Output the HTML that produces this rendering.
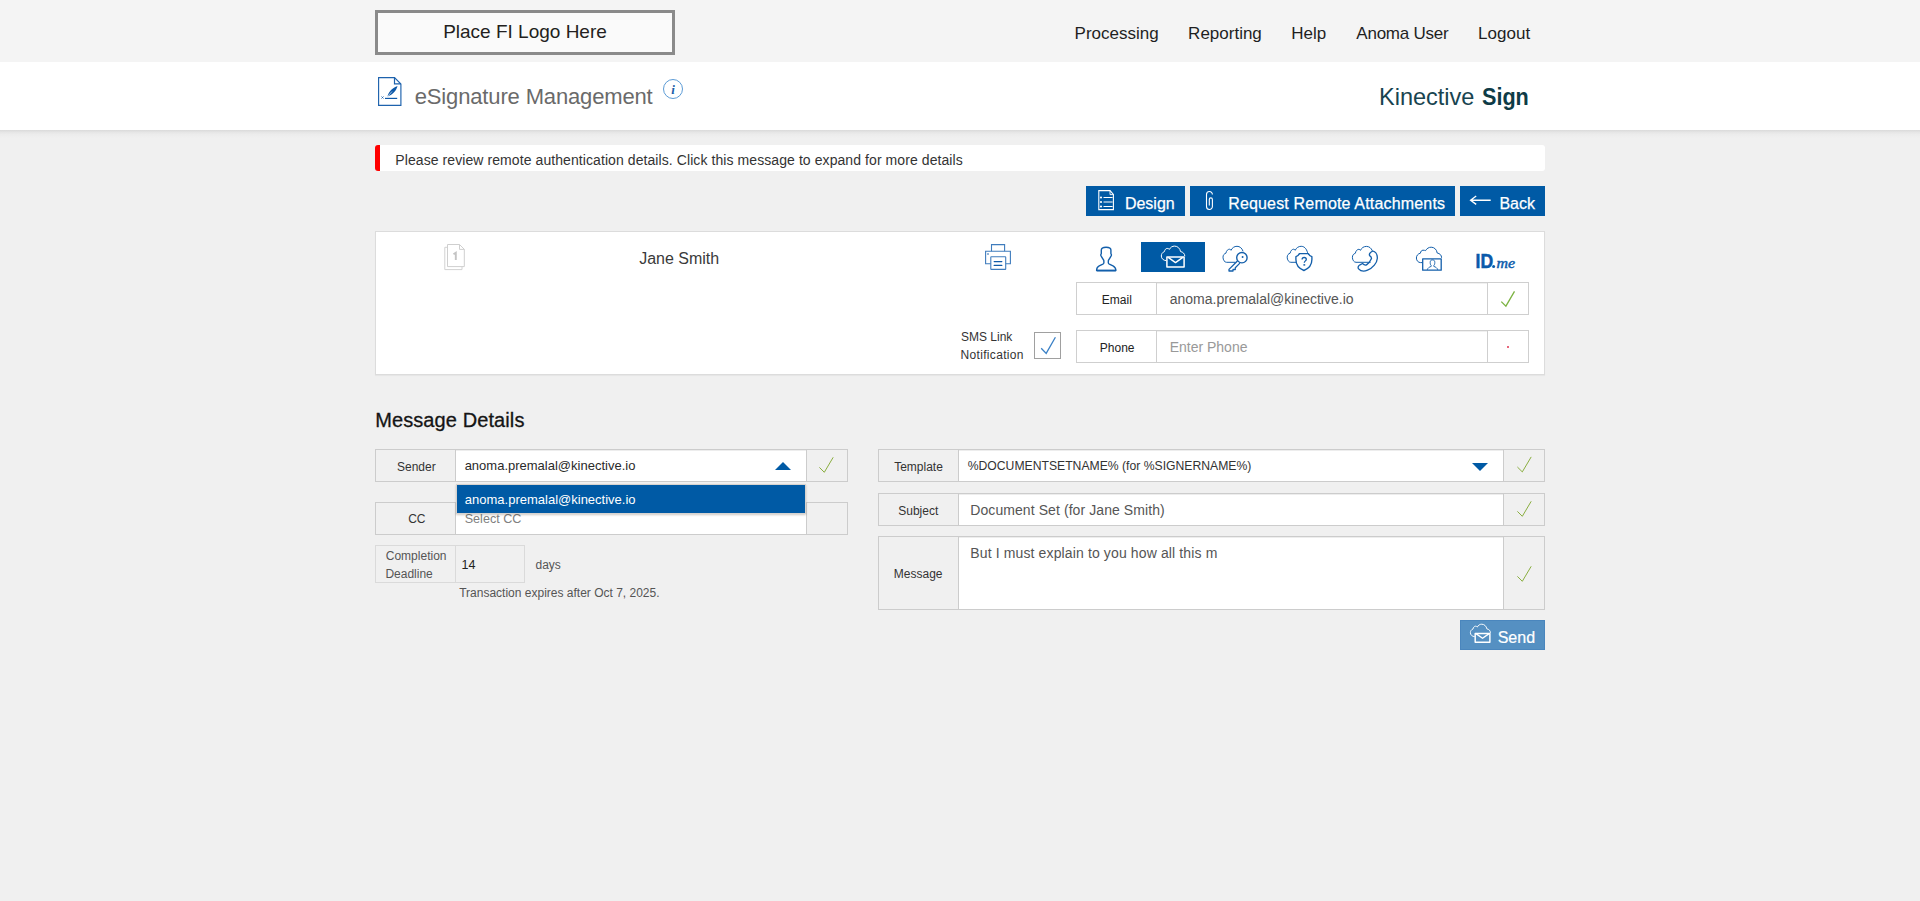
<!DOCTYPE html>
<html><head><meta charset="utf-8"><title>eSignature Management</title>
<style>
html,body{margin:0;padding:0;}
body{width:1920px;height:901px;overflow:hidden;position:relative;background:#f0f0f0;font-family:"Liberation Sans",sans-serif;}
body>div,body>svg{position:absolute;}
.t{white-space:nowrap;}
svg{overflow:visible;}
</style></head><body>
<div style="left:0px;top:0px;width:1920px;height:62px;background:#f4f4f4"></div>
<div style="left:0px;top:62px;width:1920px;height:68px;background:#fff"></div>
<div style="left:0px;top:130px;width:1920px;height:8px;background:linear-gradient(#dadada,#e6e6e6 30%,#ececec 55%,#f0f0f0)"></div>
<div style="left:375px;top:10px;width:300px;height:45px;background:#fafafa;border:3px solid #8a8a8a;box-sizing:border-box"></div>
<div class="t" style="left:443.14px;top:22.00px;font-size:19px;line-height:19px;color:#231f20;">Place FI Logo Here</div>
<div class="t" style="left:1074.61px;top:25.00px;font-size:17px;line-height:17px;color:#1f1f1f;">Processing</div>
<div class="t" style="left:1188.11px;top:25.00px;font-size:17px;line-height:17px;color:#1f1f1f;">Reporting</div>
<div class="t" style="left:1291.21px;top:25.00px;font-size:17px;line-height:17px;color:#1f1f1f;">Help</div>
<div class="t" style="left:1356.37px;top:25.00px;font-size:17px;line-height:17px;color:#1f1f1f;letter-spacing:-0.25px;">Anoma User</div>
<div class="t" style="left:1478.11px;top:25.00px;font-size:17px;line-height:17px;color:#1f1f1f;">Logout</div>
<svg style="left:376px;top:75px" width="28" height="33" viewBox="376 75 28 33">
<path d="M378.6,77.6 H394.5 L400.9,84 V105.4 H378.6 Z" fill="none" stroke="#1d62ad" stroke-width="1.15"/>
<path d="M394.5,77.5 V83.8 H401" fill="none" stroke="#1d62ad" stroke-width="1.2"/>
<path d="M381.5,96.5 l2,2 M383.5,96.5 l-2,2" stroke="#1d62ad" stroke-width="0.9"/>
<path d="M385,98.4 H397.2" stroke="#0d58a8" stroke-width="1.2"/>
<path d="M387.5,97 C388,93 391,88.5 397.5,86 C396.5,90 393.5,94 388.5,96 Z" fill="#0d58a8"/>
<path d="M387,97.2 L392,91.5" stroke="#fff" stroke-width="0.6"/>
</svg>
<div class="t" style="left:414.77px;top:86.00px;font-size:22px;line-height:22px;color:#6a6a6a;letter-spacing:-0.15px;">eSignature Management</div>
<svg style="left:662px;top:78px" width="22" height="22" viewBox="662 78 22 22">
<circle cx="673" cy="89" r="9.5" fill="none" stroke="#4a90d0" stroke-width="0.9"/>
<text x="673" y="94" text-anchor="middle" font-family="Liberation Serif" font-style="italic" font-weight="bold" font-size="13" fill="#1c5fa9">i</text>
</svg>
<div class="t" style="left:1378.73px;top:85.00px;font-size:24px;line-height:24px;color:#184450;transform:scaleX(0.98);transform-origin:0 0;">Kinective</div>
<div class="t" style="left:1481.91px;top:85.00px;font-size:24px;line-height:24px;color:#0e3b46;font-weight:bold;transform:scaleX(0.9);transform-origin:0 0;">Sign</div>
<div style="left:375px;top:145px;width:1170px;height:26px;background:#fff;border-left:5px solid #ff0000;border-radius:3px;box-sizing:border-box"></div>
<div class="t" style="left:395.35px;top:153.00px;font-size:14px;line-height:14px;color:#333;letter-spacing:0.08px;">Please review remote authentication details. Click this message to expand for more details</div>
<div style="left:1086px;top:186px;width:99px;height:30px;background:#005aa5"></div>
<div style="left:1190px;top:186px;width:265px;height:30px;background:#005aa5"></div>
<div style="left:1460px;top:186px;width:85px;height:30px;background:#005aa5"></div>
<svg style="left:1094px;top:186px" width="26" height="30" viewBox="1094 186 26 30">
<path d="M1098.8,190.6 H1110 L1113.4,194.4 V209.6 H1098.8 Z" fill="none" stroke="#fff" stroke-width="1.1"/>
<path d="M1110,190.6 V194.6 H1113.4" fill="none" stroke="#fff" stroke-width="0.9"/>
<circle cx="1101" cy="197.5" r="1.1" fill="#fff"/><circle cx="1101" cy="202" r="1.1" fill="#fff"/><circle cx="1101" cy="206.5" r="1.1" fill="#fff"/>
<path d="M1103.5,197.5 H1112.6 M1103.5,202 H1112.6 M1103.5,206.5 H1112.6" stroke="#fff" stroke-width="1"/>
</svg>
<svg style="left:1198px;top:186px" width="24" height="30" viewBox="1198 186 24 30">
<path d="M1212.4,194.5 A2.95,2.95 0 0 0 1206.5,194.5 V206.5 A2.95,2.95 0 0 0 1212.4,206.5 V199.4 A1.55,1.55 0 0 0 1209.3,199.4 V205.6" fill="none" stroke="#fff" stroke-width="1.1"/>
</svg>
<svg style="left:1460px;top:186px" width="40" height="30" viewBox="1460 186 40 30">
<path d="M1476.2,196 L1470.6,200.2 L1476.2,204.4 M1470.8,200.2 H1490.7" fill="none" stroke="#fff" stroke-width="1.35"/>
</svg>
<div class="t" style="left:1124.89px;top:196.00px;font-size:16px;line-height:16px;color:#fff;-webkit-text-stroke:0.25px #fff;">Design</div>
<div class="t" style="left:1228.19px;top:196.00px;font-size:16px;line-height:16px;color:#fff;letter-spacing:0.17px;-webkit-text-stroke:0.25px #fff;">Request Remote Attachments</div>
<div class="t" style="left:1499.39px;top:196.00px;font-size:16px;line-height:16px;color:#fff;-webkit-text-stroke:0.25px #fff;">Back</div>
<div style="left:375px;top:231px;width:1170px;height:144px;background:#fff;border:1px solid #dcdcdc;box-sizing:border-box;box-shadow:0 1px 1px rgba(0,0,0,.04)"></div>
<svg style="left:440px;top:240px" width="30" height="34" viewBox="440 240 30 34">
<path d="M447.3,247.3 H444.8 V269.6 H462 V267" fill="none" stroke="#d2d2d2" stroke-width="1"/>
<path d="M447.5,244.5 H459.5 L464.3,249.3 V266.6 H447.5 Z" fill="#fff" stroke="#cfcfcf" stroke-width="1"/>
<path d="M459.5,244.5 V249.4 H464.3" fill="none" stroke="#cfcfcf" stroke-width="1"/>
<path d="M453.5,254.3 L455.8,252.7 V260" fill="none" stroke="#c4c4c4" stroke-width="1.9"/>
</svg>
<div class="t" style="left:639.15px;top:251.00px;font-size:16px;line-height:16px;color:#3a3a3a;">Jane Smith</div>
<svg style="left:980px;top:240px" width="36" height="34" viewBox="980 240 36 34">
<g fill="none" stroke="#3f7cbd" stroke-width="1.1">
<path d="M991.5,251.3 V244.6 H1004.6 V251.3"/>
<path d="M990.8,263.7 H985.6 V251.3 H1010.4 V263.7 H1005.7"/>
<rect x="990.8" y="256.7" width="14.9" height="12.7" rx="0.5"/>
</g>
<path d="M994.2,261.6 H1001.8 M994.2,265.4 H1001.8" stroke="#0f5aa8" stroke-width="1.3" stroke-linecap="round"/>
<circle cx="988" cy="254" r="0.8" fill="#0f5aa8"/>
</svg>
<div style="left:1141px;top:242px;width:64px;height:30px;background:#005aa5"></div>
<svg style="left:1090px;top:240px" width="440" height="36" viewBox="1090 240 440 36">
<g fill="none" stroke="#135fab" stroke-width="1.4" stroke-linejoin="round">
<path d="M1096.6,270.6 H1115.9 C1115.9,268 1115,266.8 1113,265.8 L1109.3,264.2 C1108.5,263.8 1108.2,263.2 1108.3,262.2 L1108.4,260.4 L1110.6,256.8 C1111.4,256 1111.6,254.6 1110.9,253.6 V250 C1110.9,248.3 1109.4,247.2 1106.1,247.2 C1102.8,247.2 1101.3,248.3 1101.3,250 V253.6 C1100.6,254.6 1100.8,256 1101.6,256.8 L1103.8,260.4 L1103.9,262.2 C1104,263.2 1103.7,263.8 1102.9,264.2 L1099.2,265.8 C1097.2,266.8 1096.6,268 1096.6,270.6 Z"/>
<path stroke-width="1.8" d="M1096.8,270.5 H1115.8"/>
</g>
<g fill="none" stroke="#fff" stroke-linejoin="round">
<path stroke-width="1" d="M1166.3,260.6 C1163.5,260.6 1161.3,258.6 1161.3,256 C1161.3,253.9 1162.6,252.2 1164.4,251.6 C1164.8,249.7 1165.8,248.4 1167.2,248.4 C1168.1,248.4 1168.9,248.8 1169.4,249.4 C1170.4,247.3 1172.3,246.1 1174.6,246.1 C1177.6,246.1 1180,248.4 1180.6,251.6 C1182.9,251.9 1184.7,253.6 1184.8,256.2"/>
<rect stroke-width="1.5" x="1166.9" y="256.9" width="17.2" height="10.2"/>
<path stroke-width="1.4" d="M1168.2,257.4 L1175.5,262.6 L1182.8,257.4"/>
</g>
<g fill="none" stroke="#135fab" stroke-linejoin="round">
<path stroke-width="1" d="M1235.4,262.3 H1226.6 C1224.5,262.3 1223,259.9 1223,257.2 C1223,255.1 1224.2,253.7 1225.9,253.2 C1226.4,250.6 1228,249.2 1229.5,249.2 C1230.2,249.2 1230.7,249.6 1231,250.3 C1232.2,247.8 1234.3,246.3 1237,246.3 C1239.8,246.3 1242,248.1 1243.1,251.4"/>
<circle stroke-width="1.4" cx="1241.9" cy="257.7" r="5.2"/>
<path stroke-width="1.3" d="M1237.4,261 L1229,269.4 V271 H1233 V269.5 H1235.3 V267.7 L1239.9,263.1"/>
</g>
<circle cx="1242.6" cy="257" r="0.95" fill="#135fab"/>
<g fill="none" stroke="#135fab" stroke-linejoin="round">
<path stroke-width="1" d="M1296.2,262.3 H1290.8 C1288.7,262.3 1287.2,259.9 1287.2,257.2 C1287.2,255.1 1288.4,253.7 1290.1,253.2 C1290.6,250.6 1292.2,249.2 1293.7,249.2 C1294.4,249.2 1294.9,249.6 1295.2,250.3 C1296.4,247.8 1298.5,246.3 1301.2,246.3 C1304,246.3 1306.4,248.3 1307.6,252.8"/>
<path stroke-width="1.35" d="M1299.4,253.6 H1308.3 C1309,255.1 1310.3,256.3 1311.9,256.7 V259.6 C1311.9,264.6 1308.8,268.6 1303.9,270.5 C1299,268.6 1295.9,264.6 1295.9,259.6 V256.7 C1297.5,256.3 1298.7,255.1 1299.4,253.6 Z"/>
<path stroke-width="1.3" d="M1302.1,259.6 C1302.1,258.1 1302.9,257.5 1304.2,257.5 C1305.5,257.5 1306.3,258.3 1306.3,259.4 C1306.3,260.8 1304.3,261 1304.3,262.7"/>
<path stroke-width="1.5" d="M1303.4,264.9 H1305.2"/>
</g>
<g fill="none" stroke="#135fab" stroke-linejoin="round">
<path stroke-width="1" d="M1370.6,262.3 H1356 C1353.9,262.3 1352.4,259.9 1352.4,257.3 C1352.4,255.2 1353.6,253.8 1355.3,253.3 C1355.8,250.7 1357.4,249.3 1358.9,249.3 C1359.6,249.3 1360.1,249.7 1360.4,250.4 C1361.6,247.9 1363.7,246.4 1366.4,246.4 C1369.2,246.4 1371.3,248.1 1372.3,250.8"/>
<path stroke-width="1.3" d="M1372.8,251 C1376,252 1377.5,255 1377.3,258.5 C1377,263 1373,267.8 1367.5,270.2 C1364.2,271.6 1360.5,271 1358.6,268.8 C1357.6,267.6 1358.2,265.8 1360,264.8 L1362.5,263.5 C1363.8,264.8 1365.5,265.5 1366.8,264.6 C1368.6,263.4 1370.4,261 1371.4,258.8 C1371.8,257.2 1370.8,256.3 1369.6,255.6 C1369,254.3 1369.6,252.6 1372.8,251 Z"/>
</g>
<g fill="none" stroke="#135fab" stroke-linejoin="round">
<path stroke-width="1" d="M1422.4,262.6 H1420.6 C1418.2,262.6 1416.4,260.6 1416.4,258 C1416.4,255.6 1418.1,253.6 1420.4,253.2 C1420.6,251.5 1421.6,250.2 1423,250.2 C1424,250.2 1425,250.4 1425.6,250.6 C1426.8,248.5 1428.8,247.2 1431.2,247.2 C1434.4,247.2 1436.8,249.7 1437.2,253 C1439.8,253.5 1441.6,255.1 1441.6,257.8"/>
<rect stroke-width="1.3" x="1422.7" y="258.8" width="18.5" height="11.4"/>
<path stroke-width="0.9" d="M1427.2,269.9 C1427.8,267.8 1429.4,267 1431.2,266.4 V265.5 C1430.3,264.8 1430.2,263.5 1430.2,262.3 C1430.2,260.6 1431.1,259.9 1432.5,259.9 C1433.9,259.9 1434.8,260.6 1434.8,262.3 C1434.8,263.5 1434.7,264.8 1433.8,265.5 V266.4 C1435.6,267 1437.2,267.8 1437.8,269.9"/>
</g>
<text x="1475.6" y="268" font-family="Liberation Sans" font-weight="bold" font-size="19.5" fill="#0a5aaa" stroke="#0a5aaa" stroke-width="0.5" textLength="17.6" lengthAdjust="spacingAndGlyphs">ID</text>
<circle cx="1493.6" cy="266.6" r="1.5" fill="#0a5aaa"/>
<text x="1496.4" y="268" font-family="Liberation Serif" font-style="italic" font-size="14.5" fill="#0a5aaa" stroke="#0a5aaa" stroke-width="0.45" textLength="18.6" lengthAdjust="spacingAndGlyphs">me</text>
</svg>
<div style="left:1076px;top:282px;width:453px;height:33px;background:#fff;border:1px solid #cfcfcf;box-sizing:border-box"></div>
<div style="left:1156px;top:282px;width:1px;height:33px;background:#cfcfcf"></div>
<div style="left:1487px;top:282px;width:1px;height:33px;background:#cfcfcf"></div>
<div style="left:1157px;top:283px;width:330px;height:1px;background:rgba(0,0,0,.06)"></div>
<div style="left:1076px;top:330px;width:453px;height:33px;background:#fff;border:1px solid #cfcfcf;box-sizing:border-box"></div>
<div style="left:1156px;top:330px;width:1px;height:33px;background:#cfcfcf"></div>
<div style="left:1487px;top:330px;width:1px;height:33px;background:#cfcfcf"></div>
<div style="left:1157px;top:331px;width:330px;height:1px;background:rgba(0,0,0,.06)"></div>
<div class="t" style="left:1101.82px;top:294.00px;font-size:12px;line-height:12px;color:#222;">Email</div>
<div class="t" style="left:1169.71px;top:292.00px;font-size:14px;line-height:14px;color:#555;">anoma.premalal@kinective.io</div>
<div class="t" style="left:1099.82px;top:342.00px;font-size:12px;line-height:12px;color:#222;">Phone</div>
<div class="t" style="left:1169.65px;top:340.00px;font-size:14px;line-height:14px;color:#999;">Enter Phone</div>
<svg style="left:1495px;top:286px" width="26" height="26" viewBox="1495 286 26 26">
<path d="M1501.3,301.6 L1505.9,306.1 L1514.5,291.4" fill="none" stroke="#7cb342" stroke-width="1.3"/>
</svg>
<div style="left:1507px;top:346px;width:2px;height:2px;background:#e03450;border-radius:1px"></div>
<div class="t" style="left:960.96px;top:331.00px;font-size:12px;line-height:12px;color:#333;">SMS Link</div>
<div class="t" style="left:960.52px;top:349.00px;font-size:12px;line-height:12px;color:#333;letter-spacing:0.33px;">Notification</div>
<div style="left:1034px;top:332px;width:27px;height:27px;background:#fff;border:1.5px solid #a0a0a0;box-sizing:border-box"></div>
<svg style="left:1034px;top:332px" width="27" height="27" viewBox="1034 332 27 27">
<path d="M1041.2,348.2 L1046.2,353.4 L1055.4,337.2" fill="none" stroke="#3a80c6" stroke-width="1.3"/>
</svg>
<div class="t" style="left:375.16px;top:410.00px;font-size:20px;line-height:20px;color:#151515;letter-spacing:0.1px;-webkit-text-stroke:0.3px #151515;">Message Details</div>
<div style="left:375px;top:449px;width:473px;height:33px;background:#fff;border:1px solid #cccccc;box-sizing:border-box"></div>
<div style="left:376px;top:450px;width:79px;height:31px;background:#f0f0f0"></div>
<div style="left:455px;top:449px;width:1px;height:33px;background:#cccccc"></div>
<div style="left:807px;top:450px;width:40px;height:31px;background:#f0f0f0"></div>
<div style="left:806px;top:449px;width:1px;height:33px;background:#cccccc"></div>
<div style="left:456px;top:450px;width:350px;height:1px;background:rgba(0,0,0,.07)"></div>
<div class="t" style="left:396.96px;top:461.00px;font-size:12px;line-height:12px;color:#333;">Sender</div>
<div class="t" style="left:464.65px;top:459.00px;font-size:13px;line-height:13px;color:#2a2a2a;">anoma.premalal@kinective.io</div>
<svg style="left:770px;top:458px" width="26" height="16" viewBox="770 458 26 16"><path d="M775,470 L783,462 L791,470 Z" fill="#005aa5"/></svg>
<div style="left:375px;top:502px;width:473px;height:33px;background:#fff;border:1px solid #cccccc;box-sizing:border-box"></div>
<div style="left:376px;top:503px;width:79px;height:31px;background:#f0f0f0"></div>
<div style="left:455px;top:502px;width:1px;height:33px;background:#cccccc"></div>
<div style="left:807px;top:503px;width:40px;height:31px;background:#f0f0f0"></div>
<div style="left:806px;top:502px;width:1px;height:33px;background:#cccccc"></div>
<div style="left:456px;top:503px;width:350px;height:1px;background:rgba(0,0,0,.07)"></div>
<div class="t" style="left:408.19px;top:513.00px;font-size:12px;line-height:12px;color:#333;">CC</div>
<div class="t" style="left:464.73px;top:513.00px;font-size:12.6px;line-height:12.6px;color:#808080;">Select CC</div>
<div style="left:456px;top:484px;width:350px;height:30px;background:#d6d3d0;box-shadow:0 1px 2px rgba(60,40,20,.25)"></div>
<div style="left:457px;top:485px;width:348px;height:28px;background:#005aa5"></div>
<div class="t" style="left:464.85px;top:493.00px;font-size:13px;line-height:13px;color:#fff;">anoma.premalal@kinective.io</div>
<div style="left:375px;top:545px;width:150px;height:38px;background:#f0f0f0;border:1px solid #dadada;box-sizing:border-box"></div>
<div style="left:455px;top:545px;width:1px;height:38px;background:#dadada"></div>
<div class="t" style="left:385.79px;top:550.00px;font-size:12px;line-height:12px;color:#555;">Completion</div>
<div class="t" style="left:385.42px;top:568.00px;font-size:12px;line-height:12px;color:#555;">Deadline</div>
<div class="t" style="left:461.45px;top:559.00px;font-size:12.5px;line-height:12.5px;color:#222;">14</div>
<div class="t" style="left:535.50px;top:559.00px;font-size:12px;line-height:12px;color:#555;">days</div>
<div class="t" style="left:459.23px;top:587.00px;font-size:12px;line-height:12px;color:#555;">Transaction expires after Oct 7, 2025.</div>
<div style="left:878px;top:449px;width:667px;height:33px;background:#fff;border:1px solid #cccccc;box-sizing:border-box"></div>
<div style="left:879px;top:450px;width:79px;height:31px;background:#f0f0f0"></div>
<div style="left:958px;top:449px;width:1px;height:33px;background:#cccccc"></div>
<div style="left:1504px;top:450px;width:40px;height:31px;background:#f0f0f0"></div>
<div style="left:1503px;top:449px;width:1px;height:33px;background:#cccccc"></div>
<div style="left:959px;top:450px;width:544px;height:1px;background:rgba(0,0,0,.07)"></div>
<div class="t" style="left:894.13px;top:461.00px;font-size:12px;line-height:12px;color:#333;">Template</div>
<div class="t" style="left:967.67px;top:460.00px;font-size:12.2px;line-height:12.2px;color:#333;">%DOCUMENTSETNAME% (for %SIGNERNAME%)</div>
<svg style="left:1468px;top:458px" width="26" height="16" viewBox="1468 458 26 16"><path d="M1472,463 L1488,463 L1480,471 Z" fill="#005aa5"/></svg>
<div style="left:878px;top:493px;width:667px;height:33px;background:#fff;border:1px solid #cccccc;box-sizing:border-box"></div>
<div style="left:879px;top:494px;width:79px;height:31px;background:#f0f0f0"></div>
<div style="left:958px;top:493px;width:1px;height:33px;background:#cccccc"></div>
<div style="left:1504px;top:494px;width:40px;height:31px;background:#f0f0f0"></div>
<div style="left:1503px;top:493px;width:1px;height:33px;background:#cccccc"></div>
<div style="left:959px;top:494px;width:544px;height:1px;background:rgba(0,0,0,.07)"></div>
<div class="t" style="left:898.26px;top:505.00px;font-size:12px;line-height:12px;color:#333;">Subject</div>
<div class="t" style="left:970.25px;top:503.00px;font-size:14px;line-height:14px;color:#555;letter-spacing:0.08px;">Document Set (for Jane Smith)</div>
<div style="left:878px;top:536px;width:667px;height:74px;background:#fff;border:1px solid #cccccc;box-sizing:border-box"></div>
<div style="left:879px;top:537px;width:79px;height:72px;background:#f0f0f0"></div>
<div style="left:958px;top:536px;width:1px;height:74px;background:#cccccc"></div>
<div style="left:1504px;top:537px;width:40px;height:72px;background:#f0f0f0"></div>
<div style="left:1503px;top:536px;width:1px;height:74px;background:#cccccc"></div>
<div style="left:959px;top:537px;width:544px;height:1px;background:rgba(0,0,0,.07)"></div>
<div class="t" style="left:893.82px;top:568.00px;font-size:12px;line-height:12px;color:#333;">Message</div>
<div class="t" style="left:970.25px;top:546.00px;font-size:14px;line-height:14px;color:#555;letter-spacing:0.13px;">But I must explain to you how all this m</div>
<svg style="left:816px;top:454px" width="22" height="22" viewBox="816 454 22 22"><path d="M819.4,467.4 L824.3,472.3 L833.2,457.3" fill="none" stroke="#8aae40" stroke-width="1"/></svg>
<svg style="left:1514px;top:453px" width="22" height="22" viewBox="1514 453 22 22"><path d="M1517.4,467.0 L1522.3,471.90000000000003 L1531.2,456.90000000000003" fill="none" stroke="#8aae40" stroke-width="1"/></svg>
<svg style="left:1514px;top:498px" width="22" height="22" viewBox="1514 498 22 22"><path d="M1517.4,511.4 L1522.3,516.3 L1531.2,501.3" fill="none" stroke="#8aae40" stroke-width="1"/></svg>
<svg style="left:1514px;top:563px" width="22" height="22" viewBox="1514 563 22 22"><path d="M1517.4,576.4 L1522.3,581.3 L1531.2,566.3" fill="none" stroke="#8aae40" stroke-width="1"/></svg>
<div style="left:1460px;top:620px;width:85px;height:30px;background:#5590c2;border:1px solid #4a86bd;box-sizing:border-box"></div>
<svg style="left:1465px;top:619.3px" width="32" height="30" viewBox="1155 240 37.4 35.1">
<g fill="none" stroke="#fff" stroke-linejoin="round">
<path stroke-width="1.1" d="M1166.3,260.6 C1163.5,260.6 1161.3,258.6 1161.3,256 C1161.3,253.9 1162.6,252.2 1164.4,251.6 C1164.8,249.7 1165.8,248.4 1167.2,248.4 C1168.1,248.4 1168.9,248.8 1169.4,249.4 C1170.4,247.3 1172.3,246.1 1174.6,246.1 C1177.6,246.1 1180,248.4 1180.6,251.6 C1182.9,251.9 1184.7,253.6 1184.8,256.2"/>
<rect stroke-width="1.7" x="1166.9" y="256.9" width="17.2" height="10.2"/>
<path stroke-width="1.6" d="M1168.2,257.4 L1175.5,262.6 L1182.8,257.4"/>
</g></svg>
<div class="t" style="left:1497.67px;top:630.00px;font-size:16px;line-height:16px;color:#fff;-webkit-text-stroke:0.2px #fff;">Send</div>
</body></html>
